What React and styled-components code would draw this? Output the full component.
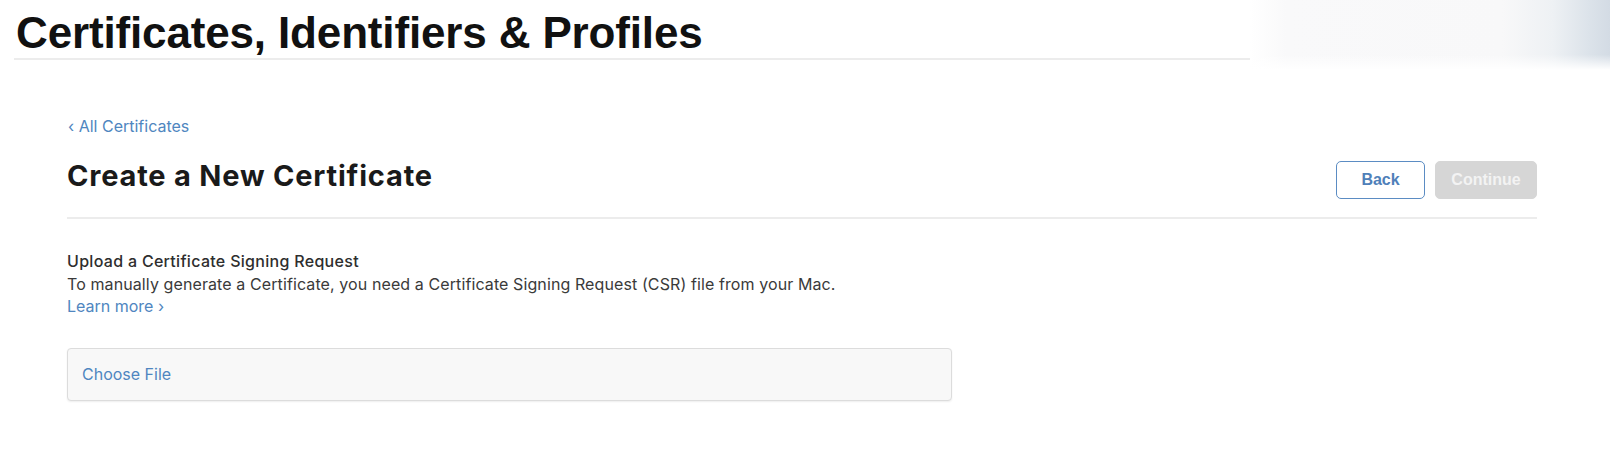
import React from "react";
import styled, { createGlobalStyle } from "styled-components";

const Global = createGlobalStyle`
  html, body { margin: 0; padding: 0; background: #ffffff; }
  body { font-family: Inter, "Liberation Sans", Arial, sans-serif; color: #1d1d1f; }
`;

const Page = styled.div`
  width: 1610px;
  height: 464px;
  overflow: hidden;
  background: #fff;
`;

const Header = styled.header`
  display: flex;
  height: 65px;
`;

const HeaderMain = styled.div`
  width: 1236px;
  margin-left: 14px;
  height: 58px;
  border-bottom: 2px solid #ececec;
  box-sizing: content-box;
`;

const SiteTitle = styled.h1`
  margin: 0;
  padding-top: 11px;
  padding-left: 2px;
  font-family: "Liberation Sans", Arial, sans-serif;
  font-size: 44px;
  line-height: 44px;
  font-weight: 700;
  letter-spacing: -0.15px;
  color: #111;
`;

const HeaderFade = styled.div`
  flex: 1;
  height: 70px;
  background:
    linear-gradient(to bottom, rgba(255,255,255,0) 78%, #ffffff 100%),
    linear-gradient(to right, #ffffff 0%, #f9f9fa 10%, #f8f8f9 70%, #eef1f4 84%, #dce3ea 94%, #d3dbe4 100%);
`;

const Main = styled.main`
  padding: 52px 73px 0 67px;
`;

const BackLink = styled.a`
  display: block;
  font-size: 16px;
  line-height: 18px;
  color: #4f86c0;
  text-decoration: none;
  margin-left: 1px;
`;

const HeadingRow = styled.div`
  display: flex;
  justify-content: space-between;
  align-items: flex-start;
  margin-top: 24px;
  padding-bottom: 18px;
  border-bottom: 2px solid #ececec;
`;

const PageTitle = styled.h2`
  margin: 0;
  padding-top: 1px;
  font-size: 29px;
  line-height: 32px;
  font-weight: 700;
  letter-spacing: 0.8px;
  color: #1a1a1a;
`;

const Actions = styled.div`
  display: flex;
  gap: 10px;
  margin-top: 2px;
`;

const Button = styled.button`
  box-sizing: border-box;
  height: 38px;
  width: ${(p) => p.$w}px;
  border-radius: 5px;
  font-family: "Liberation Sans", Arial, sans-serif;
  font-size: 16px;
  font-weight: 700;
  cursor: pointer;
  border: 1px solid ${(p) => (p.$primary ? "#d6d6d6" : "#5b8cc3")};
  background: ${(p) => (p.$primary ? "#d6d6d6" : "#ffffff")};
  color: ${(p) => (p.$primary ? "#f3f3f3" : "#4f80b9")};
`;

const Section = styled.section`
  margin-top: 31px;
  font-size: 16px;
  line-height: 22.5px;
`;

const SectionLabel = styled.div`
  color: #2e2e2e;
  font-weight: 500;
  letter-spacing: 0.3px;
`;

const SectionText = styled.div`
  color: #3a3a3a;
  letter-spacing: 0.1px;
`;

const InlineLink = styled.a`
  color: #4f86c0;
  text-decoration: none;
`;

const FileBox = styled.div`
  box-sizing: border-box;
  margin-top: 30px;
  width: 885px;
  height: 53px;
  display: flex;
  align-items: center;
  padding-left: 14px;
  background: #f8f8f8;
  border: 1px solid #dcdcdc;
  border-radius: 4px;
  box-shadow: 0 1px 2px rgba(0, 0, 0, 0.07);
  font-size: 16px;
  color: #4f86c0;
`;

export default function App() {
  return (
    <Page>
      <Global />
      <Header>
        <HeaderMain>
          <SiteTitle>Certificates, Identifiers &amp; Profiles</SiteTitle>
        </HeaderMain>
        <HeaderFade />
      </Header>
      <Main>
        <BackLink href="#">‹ All Certificates</BackLink>
        <HeadingRow>
          <PageTitle>Create a New Certificate</PageTitle>
          <Actions>
            <Button $w={89}>Back</Button>
            <Button $w={102} $primary>Continue</Button>
          </Actions>
        </HeadingRow>
        <Section>
          <SectionLabel>Upload a Certificate Signing Request</SectionLabel>
          <SectionText>
            To manually generate a Certificate, you need a Certificate Signing Request (CSR) file from your Mac.
          </SectionText>
          <InlineLink href="#">Learn more ›</InlineLink>
        </Section>
        <FileBox>Choose File</FileBox>
      </Main>
    </Page>
  );
}
